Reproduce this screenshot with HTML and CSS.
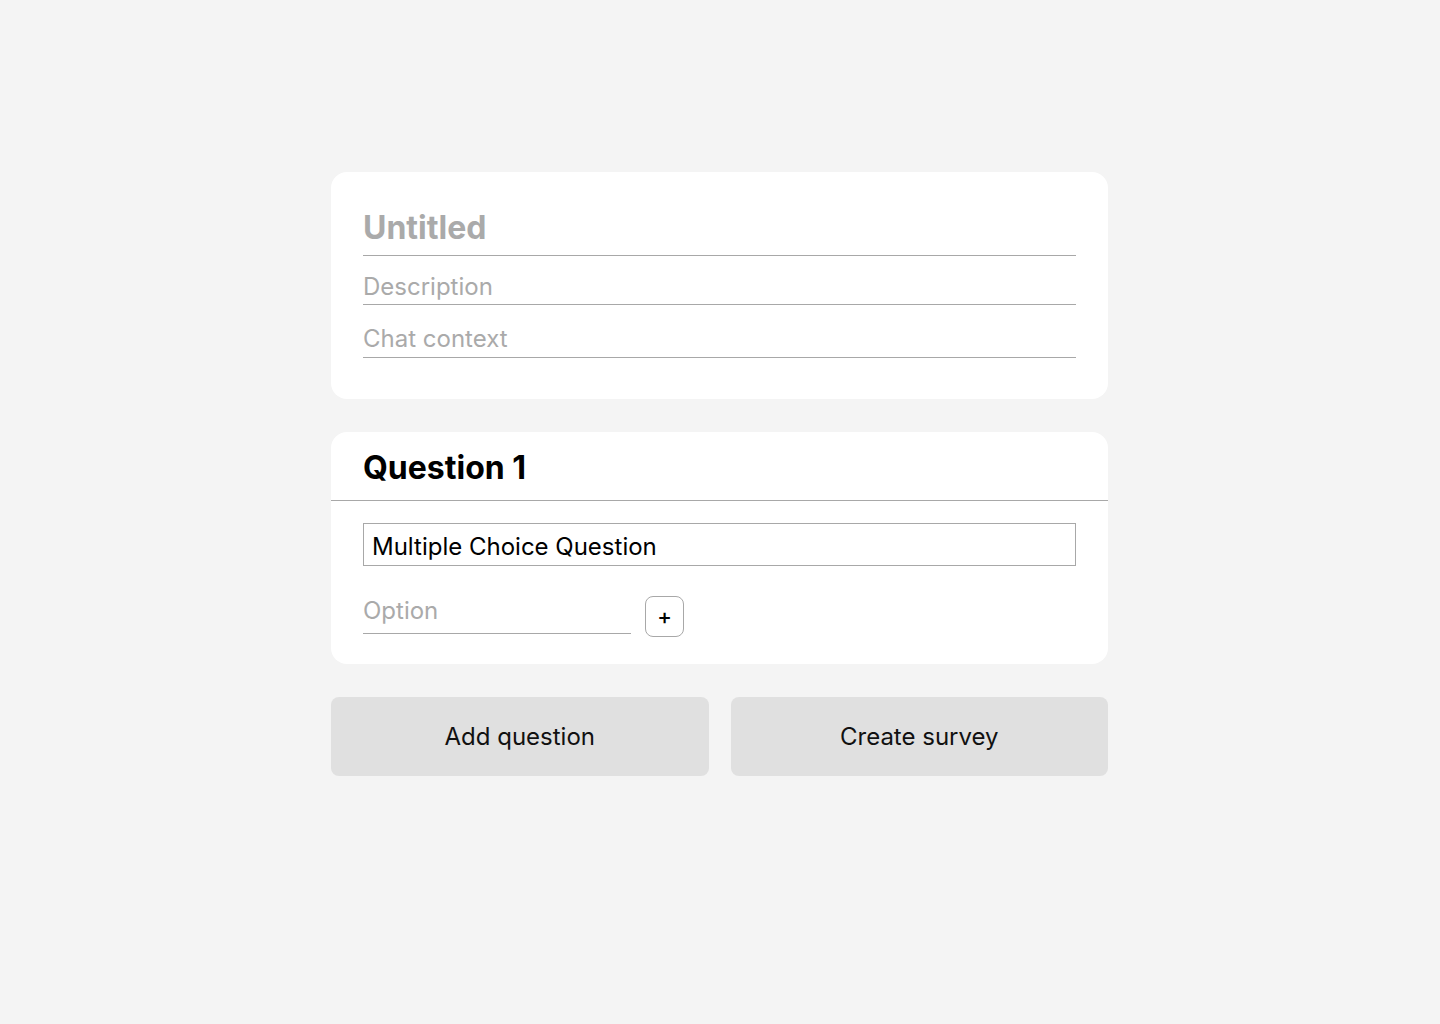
FILE: index.html
```html
<!DOCTYPE html>
<html lang="en">
<head>
<meta charset="utf-8">
<title>Create survey</title>
<link rel="stylesheet" href="styles.css">
</head>
<body>
<main class="page">
  <section class="card card-meta">
    <input class="field field-title" type="text" placeholder="Untitled">
    <input class="field field-desc" type="text" placeholder="Description">
    <input class="field field-chat" type="text" placeholder="Chat context">
  </section>
  <section class="card card-question">
    <h2 class="q-header">Question 1</h2>
    <div class="q-body">
      <input class="q-text" type="text" value="Multiple Choice Question">
      <div class="option-row">
        <input class="field field-option" type="text" placeholder="Option">
        <button class="add-option" type="button">+</button>
      </div>
    </div>
  </section>
  <div class="actions">
    <button class="action" type="button">Add question</button>
    <button class="action" type="button">Create survey</button>
  </div>
</main>
</body>
</html>
```

FILE: styles.css
```css
html, body {
  margin: 0;
  padding: 0;
}
body {
  background: #f4f4f4;
  font-family: Inter, "Noto Sans", "Liberation Sans", sans-serif;
  color: #000;
}
.page {
  width: 777px;
  margin: 172px 0 0 calc(50% - 389px);
  display: flex;
  flex-direction: column;
}
.card {
  background: #fff;
  border-radius: 16px;
}
.card-meta {
  padding: 32px 32px 41px;
  display: flex;
  flex-direction: column;
}
.field {
  display: block;
  width: 100%;
  box-sizing: border-box;
  border: none;
  border-bottom: 1px solid #a8a8a8;
  background: transparent;
  font-family: inherit;
  color: #000;
  outline: none;
  margin: 0;
  border-radius: 0;
}
.field::placeholder {
  color: #aaaaaa;
  opacity: 1;
}
.field-title {
  font-size: 32px;
  font-weight: 700;
  line-height: 39px;
  padding: 4px 0 8px;
}
.field-desc,
.field-chat,
.field-option {
  font-size: 24px;
  font-weight: 400;
  line-height: 29px;
  padding: 7px 0 3px;
}
.field-desc {
  margin-top: 9px;
}
.field-chat {
  margin-top: 13px;
  padding: 6px 0 4px;
}
.card-question {
  margin-top: 33px;
}
.q-header {
  margin: 0;
  padding: 16px 32px 13px;
  font-size: 32px;
  font-weight: 700;
  line-height: 39px;
  border-bottom: 1px solid #a8a8a8;
}
.q-body {
  padding: 22px 32px 27px;
}
.q-text {
  display: block;
  width: 100%;
  box-sizing: border-box;
  border: 1px solid #a8a8a8;
  border-radius: 0;
  margin: 0;
  padding: 8px 8px 4px;
  font-family: inherit;
  font-size: 24px;
  line-height: 29px;
  color: #000;
  background: #fff;
  outline: none;
}
.option-row {
  margin-top: 24px;
  display: flex;
  align-items: flex-start;
  gap: 14px;
}
.field-option {
  width: 268px;
  padding: 6px 0 8px;
}
.add-option {
  margin-top: 6px;
  width: 39px;
  height: 41px;
  box-sizing: border-box;
  border: 1px solid #a8a8a8;
  border-radius: 8px;
  background: #fff;
  font-family: inherit;
  font-size: 22px;
  font-weight: 500;
  line-height: 1;
  color: #000;
  padding: 0 0 1px;
  display: flex;
  align-items: center;
  justify-content: center;
}
.actions {
  margin-top: 33px;
  display: grid;
  grid-template-columns: 1fr 1fr;
  gap: 22px;
}
.action {
  height: 79px;
  border: none;
  border-radius: 8px;
  background: #e0e0e0;
  font-family: inherit;
  font-size: 24px;
  color: #111;
  padding: 0;
}
```
